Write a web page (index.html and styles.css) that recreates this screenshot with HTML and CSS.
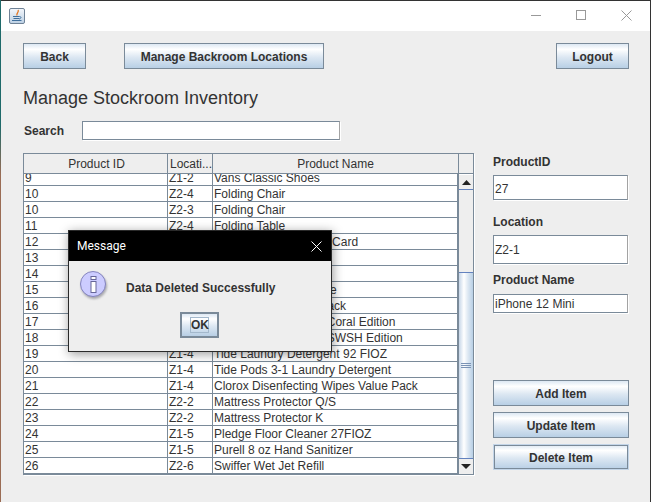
FILE: index.html
```html
<!DOCTYPE html>
<html lang="en">
<head>
<meta charset="utf-8">
<title>Manage Stockroom Inventory</title>
<link rel="stylesheet" href="styles.css">
</head>
<body>
<div class="window">
  <header class="titlebar">
    <svg class="app-icon" width="16" height="16" viewBox="0 0 16 16">
      <defs><linearGradient id="ig" x1="0" y1="0" x2="0" y2="1"><stop offset="0" stop-color="#f4f7fb"/><stop offset="1" stop-color="#bcd0e4"/></linearGradient></defs>
      <rect x="0.500" y="0.500" width="15" height="15" rx="1.500" fill="url(#ig)" stroke="#6f8296"/>
      <path d="M9 2C10.500 4 7 5 8 7.500" fill="none" stroke="#e2761f" stroke-width="1.300"/>
      <path d="M4 8.500h6.500M4.500 10.500h5.500M3 12.500h9.500" fill="none" stroke="#3f6f9c"/>
      <path d="M10.500 8.500c2 0 2 2-.5 2.500" fill="none" stroke="#3f6f9c"/>
    </svg>
    <div class="win-controls">
      <svg width="11" height="11" viewBox="0 0 11 11"><path d="M0 5.500h10" stroke="#999" fill="none"/></svg>
      <svg width="11" height="11" viewBox="0 0 11 11"><rect x="0.500" y="0.500" width="9" height="9" stroke="#999" fill="none"/></svg>
      <svg width="11" height="11" viewBox="0 0 11 11"><path d="M0.500 0.500l10 10M10.500 0.500l-10 10" stroke="#999" fill="none"/></svg>
    </div>
  </header>
  <main class="content">
    <div class="topbar">
      <button class="btn back">Back</button>
      <button class="btn manage">Manage Backroom Locations</button>
      <button class="btn logout">Logout</button>
    </div>
    <h1 class="heading">Manage Stockroom Inventory</h1>
    <div class="search">
      <label class="label search-label">Search</label>
      <div class="field search-field"></div>
    </div>
    <div class="columns">
      <div class="table">
        <div class="thead">
          <div class="th c1">Product ID</div>
          <div class="th c2">Locati...</div>
          <div class="th c3">Product Name</div>
          <div class="th c4"></div>
        </div>
        <div class="tbody">
          <div class="rows">
            <div class="row first"><span class="c1">9</span><span class="c2">Z1-2</span><span class="c3">Vans Classic Shoes</span></div>
            <div class="row"><span class="c1">10</span><span class="c2">Z2-4</span><span class="c3">Folding Chair</span></div>
            <div class="row"><span class="c1">10</span><span class="c2">Z2-3</span><span class="c3">Folding Chair</span></div>
            <div class="row"><span class="c1">11</span><span class="c2">Z2-4</span><span class="c3">Folding Table</span></div>
            <div class="row"><span class="c1">12</span><span class="c2">Z1-1</span><span class="c3">PlayStation Store Gift Card</span></div>
            <div class="row"><span class="c1">13</span><span class="c2">Z1-1</span><span class="c3"></span></div>
            <div class="row"><span class="c1">14</span><span class="c2">Z1-1</span><span class="c3"></span></div>
            <div class="row"><span class="c1">15</span><span class="c2">Z1-1</span><span class="c3">Nintendo Switch Game</span></div>
            <div class="row"><span class="c1">16</span><span class="c2">Z1-1</span><span class="c3">Nintendo Joy-Cons Pack</span></div>
            <div class="row"><span class="c1">17</span><span class="c2">Z1-1</span><span class="c3">Nintendo Switch Lite Coral Edition</span></div>
            <div class="row"><span class="c1">18</span><span class="c2">Z1-1</span><span class="c3">Nintendo Switch Lite SWSH Edition</span></div>
            <div class="row"><span class="c1">19</span><span class="c2">Z1-4</span><span class="c3">Tide Laundry Detergent 92 FIOZ</span></div>
            <div class="row"><span class="c1">20</span><span class="c2">Z1-4</span><span class="c3">Tide Pods 3-1 Laundry Detergent</span></div>
            <div class="row"><span class="c1">21</span><span class="c2">Z1-4</span><span class="c3">Clorox Disenfecting Wipes Value Pack</span></div>
            <div class="row"><span class="c1">22</span><span class="c2">Z2-2</span><span class="c3">Mattress Protector Q/S</span></div>
            <div class="row"><span class="c1">23</span><span class="c2">Z2-2</span><span class="c3">Mattress Protector K</span></div>
            <div class="row"><span class="c1">24</span><span class="c2">Z1-5</span><span class="c3">Pledge Floor Cleaner 27FIOZ</span></div>
            <div class="row"><span class="c1">25</span><span class="c2">Z1-5</span><span class="c3">Purell 8 oz Hand Sanitizer</span></div>
            <div class="row"><span class="c1">26</span><span class="c2">Z2-6</span><span class="c3">Swiffer Wet Jet Refill</span></div>
          </div>
          <div class="scrollbar">
            <div class="sb-btn"><svg width="9" height="5" viewBox="0 0 9 5"><path d="M4.500 0L9 5H0z" fill="#222"/></svg></div>
            <div class="sb-track"></div>
            <div class="sb-thumb"><svg width="10" height="5" viewBox="0 0 10 5"><path d="M0 .5h10M0 2.500h10M0 4.500h10" stroke="#7b93b5" fill="none"/></svg></div>
            <div class="sb-btn down"><svg width="10" height="5" viewBox="0 0 10 5"><path d="M0 0h10L5 5z" fill="#222"/></svg></div>
          </div>
        </div>
      </div>
      <aside class="side">
        <label class="label side-label l-id">ProductID</label>
        <div class="field f-id">27</div>
        <label class="label side-label l-loc">Location</label>
        <div class="field f-loc">Z2-1</div>
        <label class="label side-label l-name">Product Name</label>
        <div class="field f-name">iPhone 12 Mini</div>
        <div class="actions">
          <button class="btn action">Add Item</button>
          <button class="btn action">Update Item</button>
          <button class="btn action focused">Delete Item</button>
        </div>
      </aside>
    </div>
  </main>
  <div class="dialog">
    <div class="dialog-title">
      <span>Message</span>
      <svg width="11" height="11" viewBox="0 0 11 11"><path d="M.5.5l10 10M10.500.5l-10 10" stroke="#fff" fill="none"/></svg>
    </div>
    <div class="dialog-body">
      <div class="dialog-msg">
        <svg class="info" width="27" height="27" viewBox="0 0 27 27">
          <circle cx="13" cy="13" r="12.500" fill="#ccccff" stroke="#8383bd"/>
          <rect x="11" y="5.500" width="5" height="3" fill="#fff" stroke="#666699"/>
          <rect x="11" y="10.500" width="5" height="11" fill="#fff" stroke="#666699"/>
        </svg>
        <span class="dialog-text">Data Deleted Successfully</span>
      </div>
      <button class="btn ok"><span class="ok-inner">OK</span></button>
    </div>
  </div>
</div>
</body>
</html>
```

FILE: styles.css
```css
* { box-sizing: border-box; }
html, body { margin: 0; padding: 0; }
body { width: 651px; height: 502px; overflow: hidden; background: linear-gradient(#1f6a6a 0, #1f6a6a 25%, #9a6c54 35%, #9a6c54 100%); font-family: "Liberation Sans", Arial, sans-serif; font-size: 12px; color: #333; }
.window { position: relative; width: 650px; height: 502px; margin-left: 1px; border-top: 1px solid #333; border-right: 1px solid #333; display: flex; flex-direction: column; background: #eee; }
.titlebar { height: 30px; background: #fff; display: flex; align-items: center; justify-content: space-between; padding-left: 8px; flex: none; }
.app-icon { display: block; margin-top: -1px; }
.win-controls { display: flex; gap: 34px; padding-right: 18px; margin-top: -1px; }
.win-controls svg { display: block; }
.content { flex: 1; padding: 12px 21px 0 22px; }
.topbar { display: flex; height: 26px; }
.btn { display: block; height: 26px; padding: 2px 0 0; border: 1px solid #7a8a99; background: linear-gradient(#dde8f3 0%, #fff 22%, #dce7f2 55%, #b8cfe5 100%); font: bold 12px "Liberation Sans", Arial, sans-serif; color: #333; text-align: center; }
.back { width: 63px; }
.manage { width: 200px; margin-left: 38px; }
.logout { width: 73px; margin-left: auto; }
.heading { margin: 19px 0 0; font-weight: normal; font-size: 18px; line-height: 20px; color: #333; }
.search { display: flex; align-items: center; margin-top: 13px; height: 19px; }
.label { font-weight: bold; font-size: 12px; line-height: 14px; color: #333; display: block; }
.search-label { width: 59px; padding-left: 1px; }
.field { border: 1px solid #7a8a99; border-right-color: #a3a3a3; background: #fff; box-shadow: 1px 1px 0 #fff; font-size: 12px; padding-left: 1px; display: flex; align-items: center; }
.search-field { width: 258px; height: 19px; }
.columns { display: flex; margin-top: 13px; }
.table { width: 451px; flex: none; border-left: 1px solid #7a8a99; box-shadow: 1px 1px 0 #fff; align-self: flex-start; }
.thead { display: flex; height: 21px; border-top: 1px solid #7a8a99; border-bottom: 1px solid #7a8a99; }
.th { border-right: 1px solid #7a8a99; background: #eee; text-align: center; line-height: 20px; white-space: nowrap; }
.thead .c1 { width: 144px; padding-left: 2px; }
.thead .c2 { width: 45px; text-align: left; padding-left: 2px; }
.thead .c3 { width: 246px; }
.thead .c4 { width: 15px; }
.tbody { display: flex; height: 301px; }
.rows { width: 435px; height: 301px; background: #fff; border-bottom: 1px solid #7a8a99; border-right: 2px solid #7a8a99; overflow: hidden; }
.row { display: flex; height: 16px; border-bottom: 1px solid #7a8a99; line-height: 16px; }
.row.first { height: 12px; line-height: 8px; }
.row span { display: block; white-space: nowrap; overflow: hidden; padding-left: 1px; }
.row .c1 { width: 144px; border-right: 1px solid #7a8a99; }
.row .c2 { width: 45px; border-right: 1px solid #7a8a99; }
.row .c3 { flex: 1; }
.scrollbar { width: 15px; height: 301px; display: flex; flex-direction: column; border-right: 1px solid #7a8a99; border-bottom: 1px solid #7a8a99; }
.sb-btn { height: 16px; flex: none; display: flex; align-items: center; justify-content: center; background: #eee; border-bottom: 1px solid #6382bf; border-top: 1px solid #fff; }
.sb-btn.down { border-bottom: 0; border-top: 1px solid #6382bf; padding-right: 1px; }
.sb-track { height: 82px; flex: none; background: #eee; }
.sb-thumb { flex: 1; border-top: 1px solid #6382bf; background: linear-gradient(90deg, #c6d6e8 0%, #fff 35%, #dce7f2 65%, #b8cfe5 100%); display: flex; align-items: center; justify-content: center; }
.side { width: 135px; margin-left: 19px; display: flex; flex-direction: column; }
.side-label { height: 14px; }
.l-id { margin-top: 2px; }
.l-loc { margin-top: 15px; }
.l-name { margin-top: 9px; }
.f-id { height: 25px; margin-top: 6px; padding-top: 2px; }
.f-loc { height: 29px; margin-top: 6px; }
.f-name { height: 19px; margin-top: 7px; }
.actions { display: flex; flex-direction: column; gap: 6px; margin-top: 67px; }
.action { width: 136px; }
.focused { border: 1px solid #c3d5e8; box-shadow: inset 0 0 0 1px #7a8a99; }
.dialog { position: absolute; left: 67px; top: 229px; width: 264px; height: 122px; border: 1px solid #2a2a2a; background: #eee; box-shadow: 1px 2px 10px rgba(0,0,0,.4); display: flex; flex-direction: column; }
.dialog-title { height: 30px; background: #000; color: #fff; flex: none; display: flex; align-items: center; justify-content: space-between; padding: 0 9px 0 8px; font-family: Roboto, "Liberation Sans", sans-serif; font-size: 12px; }
.dialog-title svg { display: block; }
.dialog-body { flex: 1; display: flex; flex-direction: column; align-items: center; }
.dialog-msg { align-self: stretch; display: flex; align-items: center; height: 28px; margin-top: 9px; padding-left: 11px; }
.info { display: block; flex: none; filter: drop-shadow(1px 2px 1px rgba(80,80,90,.45)); }
.dialog-text { font-weight: bold; margin-left: 19px; padding-top: 8px; }
.ok { width: 39px; height: 26px; margin: 14px 1px 0 0; padding: 0; border: 2px solid #7a8a99; display: flex; align-items: center; justify-content: center; }
.ok-inner { border: 1px solid #a3b8cc; width: 19px; height: 16px; line-height: 14px; }
```
